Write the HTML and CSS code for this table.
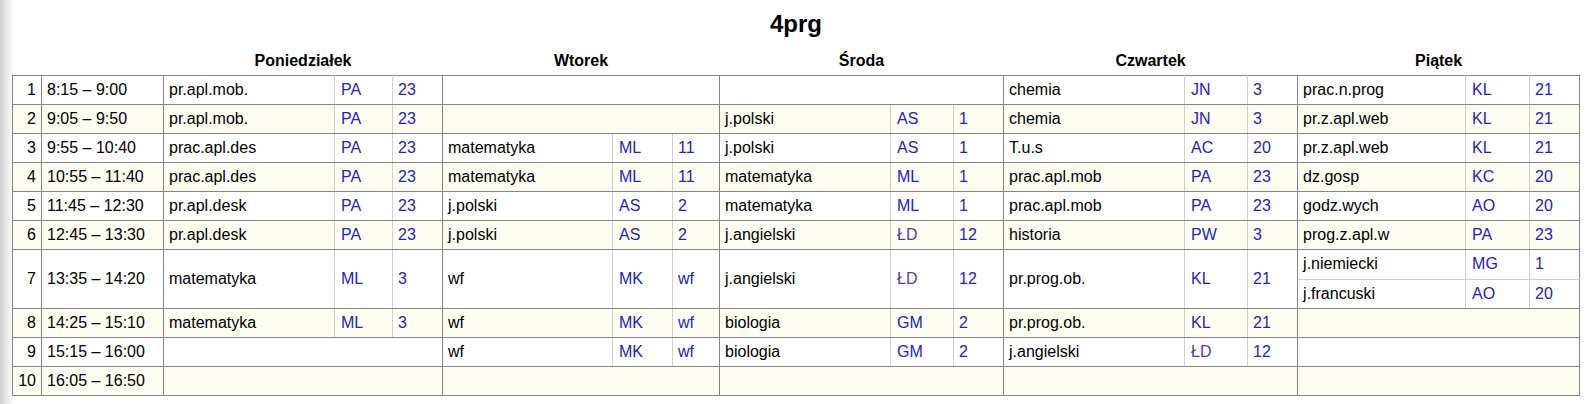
FILE: index.html
```html
<!DOCTYPE html>
<html lang="pl">
<head>
<meta charset="utf-8">
<title>4prg</title>
<link rel="stylesheet" href="styles.css">
</head>
<body>
<div class="title">4prg</div>
<table class="plan">
<colgroup>
<col class="w29"><col class="w122">
<col class="w171"><col class="w58"><col class="w50">
<col class="w170"><col class="w60"><col class="w47">
<col class="w171"><col class="w63"><col class="w50">
<col class="w181"><col class="w63"><col class="w50">
<col class="w168"><col class="w64"><col class="w50">
</colgroup>
<thead>
<tr><th></th><th></th><th colspan="3">Poniedziałek</th><th colspan="3">Wtorek</th><th colspan="3">Środa</th><th colspan="3">Czwartek</th><th colspan="3">Piątek</th></tr>
</thead>
<tbody>
<tr class="odd">
<td class="nr">1</td><td class="time">8:15 – 9:00</td>
<td class="subj">pr.apl.mob.</td><td class="tch">PA</td><td class="room">23</td>
<td class="empty" colspan="3"></td>
<td class="empty" colspan="3"></td>
<td class="subj">chemia</td><td class="tch">JN</td><td class="room">3</td>
<td class="subj">prac.n.prog</td><td class="tch">KL</td><td class="room">21</td>
</tr>
<tr class="even">
<td class="nr">2</td><td class="time">9:05 – 9:50</td>
<td class="subj">pr.apl.mob.</td><td class="tch">PA</td><td class="room">23</td>
<td class="empty" colspan="3"></td>
<td class="subj">j.polski</td><td class="tch">AS</td><td class="room">1</td>
<td class="subj">chemia</td><td class="tch">JN</td><td class="room">3</td>
<td class="subj">pr.z.apl.web</td><td class="tch">KL</td><td class="room">21</td>
</tr>
<tr class="odd">
<td class="nr">3</td><td class="time">9:55 – 10:40</td>
<td class="subj">prac.apl.des</td><td class="tch">PA</td><td class="room">23</td>
<td class="subj">matematyka</td><td class="tch">ML</td><td class="room">11</td>
<td class="subj">j.polski</td><td class="tch">AS</td><td class="room">1</td>
<td class="subj">T.u.s</td><td class="tch">AC</td><td class="room">20</td>
<td class="subj">pr.z.apl.web</td><td class="tch">KL</td><td class="room">21</td>
</tr>
<tr class="even">
<td class="nr">4</td><td class="time">10:55 – 11:40</td>
<td class="subj">prac.apl.des</td><td class="tch">PA</td><td class="room">23</td>
<td class="subj">matematyka</td><td class="tch">ML</td><td class="room">11</td>
<td class="subj">matematyka</td><td class="tch">ML</td><td class="room">1</td>
<td class="subj">prac.apl.mob</td><td class="tch">PA</td><td class="room">23</td>
<td class="subj">dz.gosp</td><td class="tch">KC</td><td class="room">20</td>
</tr>
<tr class="odd">
<td class="nr">5</td><td class="time">11:45 – 12:30</td>
<td class="subj">pr.apl.desk</td><td class="tch">PA</td><td class="room">23</td>
<td class="subj">j.polski</td><td class="tch">AS</td><td class="room">2</td>
<td class="subj">matematyka</td><td class="tch">ML</td><td class="room">1</td>
<td class="subj">prac.apl.mob</td><td class="tch">PA</td><td class="room">23</td>
<td class="subj">godz.wych</td><td class="tch">AO</td><td class="room">20</td>
</tr>
<tr class="even">
<td class="nr">6</td><td class="time">12:45 – 13:30</td>
<td class="subj">pr.apl.desk</td><td class="tch">PA</td><td class="room">23</td>
<td class="subj">j.polski</td><td class="tch">AS</td><td class="room">2</td>
<td class="subj">j.angielski</td><td class="tch visited">ŁD</td><td class="room">12</td>
<td class="subj">historia</td><td class="tch">PW</td><td class="room">3</td>
<td class="subj">prog.z.apl.w</td><td class="tch">PA</td><td class="room">23</td>
</tr>
<tr class="odd">
<td class="nr" rowspan="2">7</td><td class="time" rowspan="2">13:35 – 14:20</td>
<td class="subj" rowspan="2">matematyka</td><td class="tch" rowspan="2">ML</td><td class="room" rowspan="2">3</td>
<td class="subj" rowspan="2">wf</td><td class="tch" rowspan="2">MK</td><td class="room" rowspan="2">wf</td>
<td class="subj" rowspan="2">j.angielski</td><td class="tch visited" rowspan="2">ŁD</td><td class="room" rowspan="2">12</td>
<td class="subj" rowspan="2">pr.prog.ob.</td><td class="tch" rowspan="2">KL</td><td class="room" rowspan="2">21</td>
<td class="subj split">j.niemiecki</td><td class="tch split">MG</td><td class="room split">1</td>
</tr>
<tr class="odd">
<td class="subj">j.francuski</td><td class="tch">AO</td><td class="room">20</td>
</tr>
<tr class="even">
<td class="nr">8</td><td class="time">14:25 – 15:10</td>
<td class="subj">matematyka</td><td class="tch">ML</td><td class="room">3</td>
<td class="subj">wf</td><td class="tch">MK</td><td class="room">wf</td>
<td class="subj">biologia</td><td class="tch">GM</td><td class="room">2</td>
<td class="subj">pr.prog.ob.</td><td class="tch">KL</td><td class="room">21</td>
<td class="empty" colspan="3"></td>
</tr>
<tr class="odd">
<td class="nr">9</td><td class="time">15:15 – 16:00</td>
<td class="empty" colspan="3"></td>
<td class="subj">wf</td><td class="tch">MK</td><td class="room">wf</td>
<td class="subj">biologia</td><td class="tch">GM</td><td class="room">2</td>
<td class="subj">j.angielski</td><td class="tch visited">ŁD</td><td class="room">12</td>
<td class="empty" colspan="3"></td>
</tr>
<tr class="even">
<td class="nr">10</td><td class="time">16:05 – 16:50</td>
<td class="empty" colspan="3"></td>
<td class="empty" colspan="3"></td>
<td class="empty" colspan="3"></td>
<td class="empty" colspan="3"></td>
<td class="empty" colspan="3"></td>
</tr>
</tbody>
</table>
</body>
</html>
```
FILE: styles.css
```css
html {
  background: #fff linear-gradient(90deg, #cbcbcb 0px, #e3e3e3 5px, #f8f8f8 11px, #fff 15px) no-repeat;
  background-size: 15px 100%;
  min-height: 100%;
}
body {
  margin: 0;
  padding: 10px 8px 0 12px;
  font-family: "Liberation Sans", Arial, sans-serif;
  font-size: 16px;
  color: #000;
}
.title {
  font-size: 24px;
  font-weight: bold;
  line-height: 28px;
  text-align: center;
}
.plan {
  width: 1568px;
  table-layout: fixed;
  border-collapse: collapse;
}
.w29 { width: 29px; }
.w122 { width: 122px; }
.w171 { width: 171px; }
.w170 { width: 170px; }
.w181 { width: 181px; }
.w168 { width: 168px; }
.w58 { width: 58px; }
.w60 { width: 60px; }
.w63 { width: 63px; }
.w64 { width: 64px; }
.w50 { width: 50px; }
.w47 { width: 47px; }

.plan th {
  height: 37px;
  padding: 0 0 5px;
  font-size: 16px;
  line-height: 18px;
  font-weight: bold;
  text-align: center;
  vertical-align: bottom;
  border: none;
  box-sizing: border-box;
}
.plan td {
  padding: 5px 0 5px 5px;
  line-height: 18px;
  white-space: nowrap;
  overflow: hidden;
  border: 1px solid #858585;
  vertical-align: middle;
}
.odd { background: #fff; }
.even { background: #fdfdf2; }

.plan td.nr {
  text-align: right;
  padding: 5px 5px 5px 0;
}
.plan td.time { padding-left: 5px; }
.plan td.subj { border-right-color: #d0d0d0; }
.plan td.tch {
  color: #2222c8;
  padding-left: 6px;
  border-right-color: #d0d0d0;
}
.plan td.room { color: #2222c8; }
.plan td.visited { color: #5c3a9c; }
.plan td.split {
  padding-bottom: 6px;
  border-bottom-color: #d0d0d0;
}
```
